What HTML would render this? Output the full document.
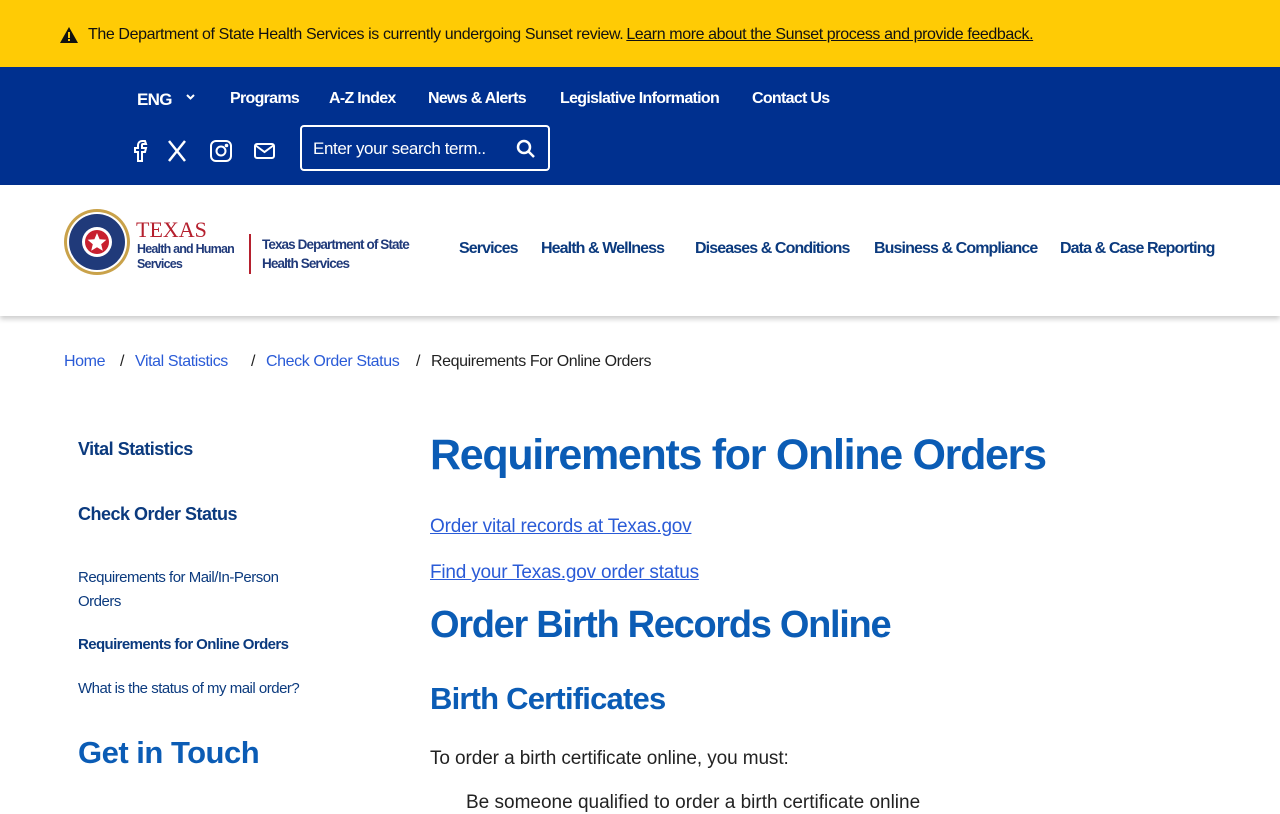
<!DOCTYPE html>
<html><head><meta charset="utf-8"><style>
*{margin:0;padding:0;box-sizing:border-box}
body{width:1280px;height:800px;overflow:hidden;font-family:"Liberation Sans",sans-serif;background:#fff;color:#222}
.alert{height:67px;background:#ffcb05;display:flex;align-items:center;padding-left:60px;font-size:16px;color:#111;letter-spacing:-0.4px;padding-top:2px}
.alert u{margin-left:3px}
.top{height:118px;background:#00308f;position:relative;color:#fff}
.tl{position:absolute;top:90px;font-weight:bold;font-size:16px;letter-spacing:-0.7px;color:#fff}
.search{position:absolute;left:300px;top:125px;width:250px;height:46px;border:2px solid #fff;border-radius:4px;color:#fff;font-size:17px;padding:12px 0 0 11px;letter-spacing:-0.4px}
.hdr{height:131px;position:relative;box-shadow:0 3px 5px rgba(0,0,0,.2)}
.mn{position:absolute;top:240px;font-weight:bold;font-size:16px;color:#0b3a7e;letter-spacing:-0.9px}
.bc{position:absolute;top:353px;font-size:16px;letter-spacing:-0.4px}
.bc a{color:#2a5bd7;text-decoration:none}
.side{position:absolute;left:78px;color:#0b3a7e;letter-spacing:-0.5px}
h1{position:absolute;left:430px;color:#0b5cb5;font-size:43px;letter-spacing:-1.3px;font-weight:bold}
.lk{position:absolute;left:430px;color:#2a5bd7;font-size:19px;text-decoration:underline;letter-spacing:-0.2px}
</style></head><body>
<div class="alert"><svg width="18" height="16" viewBox="0 0 18 16"><path d="M9 0L18 16H0Z" fill="#111"/><rect x="8" y="5" width="2" height="6" fill="#ffcb05"/><rect x="8" y="12" width="2" height="2" fill="#ffcb05"/></svg><span style="margin-left:10px">The Department of State Health Services is currently undergoing Sunset review.</span><u>Learn more about the Sunset process and provide feedback.</u></div>
<div class="top"></div>
<span class="tl" style="left:137px;font-size:17px">ENG</span>
<svg style="position:absolute;left:186px;top:94px" width="9" height="6" viewBox="0 0 9 6" fill="none" stroke="#fff" stroke-width="2"><path d="M1 1l3.5 3.5L8 1"/></svg>
<span class="tl" style="left:230px">Programs</span>
<span class="tl" style="left:329px">A-Z Index</span>
<span class="tl" style="left:428px">News &amp; Alerts</span>
<span class="tl" style="left:560px">Legislative Information</span>
<span class="tl" style="left:752px">Contact Us</span>
<svg style="position:absolute;left:130px;top:137px" width="150" height="26" viewBox="0 0 150 26" fill="none" stroke="#fff" stroke-width="2">
<path d="M15 4h-3a4 4 0 0 0-4 4v3H5v4h3v9h4v-9h3l1-4h-4V8a1 1 0 0 1 1-1h3z"/>
<path d="M39 4l16 20M55 4L39 24" stroke-width="2.5"/>
<rect x="81" y="4" width="20" height="20" rx="5"/><circle cx="91" cy="14" r="4.5"/><circle cx="96.5" cy="8.5" r="0.8" fill="#fff"/>
<rect x="125" y="7" width="19" height="14" rx="2"/><path d="M125 8l9.5 7 9.5-7"/>
</svg>
<div class="search">Enter your search term..<svg style="position:absolute;right:12px;top:12px" width="20" height="20" viewBox="0 0 20 20" fill="none" stroke="#fff" stroke-width="2.5"><circle cx="8" cy="8" r="6"/><path d="M12.5 12.5L18 18"/></svg></div>
<div class="hdr"></div>
<svg style="position:absolute;left:63px;top:208px" width="68" height="68" viewBox="0 0 68 68"><circle cx="34" cy="34" r="33" fill="#c9a24a"/><circle cx="34" cy="34" r="30" fill="#fff"/><circle cx="34" cy="34" r="28" fill="#203a7a"/><circle cx="34" cy="34" r="15" fill="#fff"/><circle cx="34" cy="34" r="12" fill="#c8202f"/><path d="M34 25l2.6 6.3 6.8.5-5.2 4.4 1.6 6.6L34 39.2l-5.8 3.6 1.6-6.6-5.2-4.4 6.8-.5z" fill="#fff"/></svg>
<div style="position:absolute;left:136px;top:219px;color:#b5202e;font-family:'Liberation Serif',serif;font-size:22px;line-height:22px">TEXAS</div>
<div style="position:absolute;left:137px;top:242px;color:#203a7a;font-size:12.5px;font-weight:bold;line-height:15px;letter-spacing:-0.8px">Health and Human<br>Services</div>
<div style="position:absolute;left:249px;top:234px;width:2px;height:40px;background:#b5202e"></div>
<div style="position:absolute;left:262px;top:235px;color:#203a7a;font-size:13.5px;font-weight:bold;line-height:19px;letter-spacing:-0.9px">Texas Department of State<br>Health Services</div>
<span class="mn" style="left:459px">Services</span>
<span class="mn" style="left:541px">Health &amp; Wellness</span>
<span class="mn" style="left:695px">Diseases &amp; Conditions</span>
<span class="mn" style="left:874px">Business &amp; Compliance</span>
<span class="mn" style="left:1060px">Data &amp; Case Reporting</span>
<span class="bc" style="left:64px"><a>Home</a></span>
<span class="bc" style="left:120px">/</span>
<span class="bc" style="left:135px"><a>Vital Statistics</a></span>
<span class="bc" style="left:251px">/</span>
<span class="bc" style="left:266px"><a>Check Order Status</a></span>
<span class="bc" style="left:416px">/</span>
<span class="bc" style="left:431px;color:#222">Requirements For Online Orders</span>
<div class="side" style="top:439px;font-size:18px;font-weight:bold">Vital Statistics</div>
<div class="side" style="top:504px;font-size:18px;font-weight:bold">Check Order Status</div>
<div class="side" style="top:566px;font-size:15px;line-height:24px;width:260px">Requirements for Mail/In-Person<br>Orders</div>
<div class="side" style="top:636px;font-size:15px;font-weight:bold;letter-spacing:-0.6px">Requirements for Online Orders</div>
<div class="side" style="top:680px;font-size:15px">What is the status of my mail order?</div>
<div class="side" style="top:735px;font-size:31px;font-weight:bold;color:#0b5cb5">Get in Touch</div>
<h1 style="top:431px">Requirements for Online Orders</h1>
<span class="lk" style="top:516px">Order vital records at Texas.gov</span>
<span class="lk" style="top:562px">Find your Texas.gov order status</span>
<h1 style="top:604px;font-size:38px">Order Birth Records Online</h1>
<h1 style="top:681px;font-size:31px;letter-spacing:-0.8px">Birth Certificates</h1>
<div style="position:absolute;left:430px;top:748px;font-size:19px;letter-spacing:-0.1px">To order a birth certificate online, you must:</div>
<div style="position:absolute;left:466px;top:792px;font-size:19px">Be someone qualified to order a birth certificate online</div>
</body></html>
